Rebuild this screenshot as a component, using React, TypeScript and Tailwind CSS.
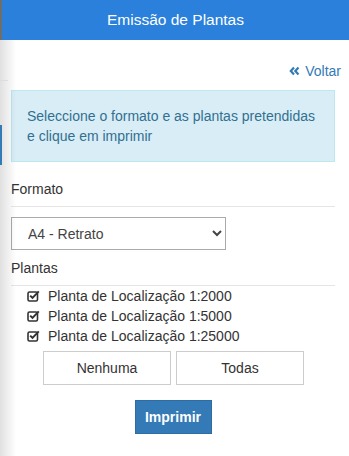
import { useState } from 'react';

const plantas = [
  'Planta de Localização 1:2000',
  'Planta de Localização 1:5000',
  'Planta de Localização 1:25000',
];

function CheckSquare() {
  return (
    <svg width="13" height="12" viewBox="0 0 13 12" className="shrink-0">
      <rect x="1" y="2" width="9.5" height="9" rx="1.5" fill="none" stroke="#333" strokeWidth="1.6" />
      <path d="M3.2 5.6 L5.5 7.9 L11.8 1.4" fill="none" stroke="#333" strokeWidth="2" />
    </svg>
  );
}

function DoubleAngle() {
  return (
    <svg width="11" height="10" viewBox="0 0 11 10" className="mr-[5px]">
      <path d="M5 1.5 L1.8 5 L5 8.5 M9.5 1.5 L6.3 5 L9.5 8.5" fill="none" stroke="#337ab7" strokeWidth="2.2" />
    </svg>
  );
}

export default function App() {
  const [checked, setChecked] = useState([true, true, true]);

  return (
    <div className="relative h-[456px] w-[349px] overflow-hidden bg-white font-['Liberation_Sans',Arial,sans-serif] text-[14px] leading-[20px] text-[#333]">
      <div className="flex h-[40px] items-center justify-center border-l-2 border-[#6e6e6e] bg-[#2a80da] text-[15.5px] text-white">
        Emissão de Plantas
      </div>

      <div className="pl-[11px] pr-[14px]">
        <div className="-mr-[6px] mt-[21px] flex items-center justify-end text-[#337ab7]">
          <DoubleAngle />
          <span>Voltar</span>
        </div>

        <div className="mt-[9px] border border-[#bce8f1] bg-[#d9edf7] p-[15px] text-[#31708f]">
          Seleccione o formato e as plantas pretendidas e clique em imprimir
        </div>

        <div className="mt-[17px] border-b border-[#e5e5e5] pb-[7px]">Formato</div>

        <select
          defaultValue="a4r"
          className="mt-[10px] h-[33px] w-[215px] border border-[#aaa] bg-white pl-[12px] text-[14px] text-[#444]"
        >
          <option value="a4r">A4 - Retrato</option>
          <option value="a4p">A4 - Paisagem</option>
        </select>

        <div className="mt-[8px] border-b border-[#e5e5e5] pb-[7px]">Plantas</div>

        <div className="flex flex-col pl-[16px]">
          {plantas.map((p, i) => (
            <label
              key={p}
              className="flex h-[20px] cursor-pointer items-center gap-[8px]"
              onClick={() => setChecked(checked.map((c, j) => (j === i ? !c : c)))}
            >
              {checked[i] ? <CheckSquare /> : <span className="h-[12px] w-[13px]" />}
              <span>{p}</span>
            </label>
          ))}
        </div>

        <div className="mt-[5px] flex gap-[5px] pl-[32px]">
          <button
            className="h-[34px] w-[128px] border border-[#ccc] bg-white text-[#333]"
            onClick={() => setChecked([false, false, false])}
          >
            Nenhuma
          </button>
          <button
            className="h-[34px] w-[128px] border border-[#ccc] bg-white text-[#333]"
            onClick={() => setChecked([true, true, true])}
          >
            Todas
          </button>
        </div>

        <div className="mt-[15px] flex justify-center">
          <button className="h-[34px] w-[77px] border border-[#2e6da4] bg-[#337ab7] font-bold text-white">
            Imprimir
          </button>
        </div>
      </div>

      <div className="pointer-events-none absolute top-[40px] left-0 h-[416px] w-[16px] bg-gradient-to-r from-[rgba(0,0,0,0.12)] to-transparent" />
      <div className="pointer-events-none absolute top-[80px] left-0 h-[1px] w-[8px] bg-[#ddd]" />
      <div className="pointer-events-none absolute top-[125px] left-0 h-[40px] w-[2px] bg-[#337ab7]" />
    </div>
  );
}
